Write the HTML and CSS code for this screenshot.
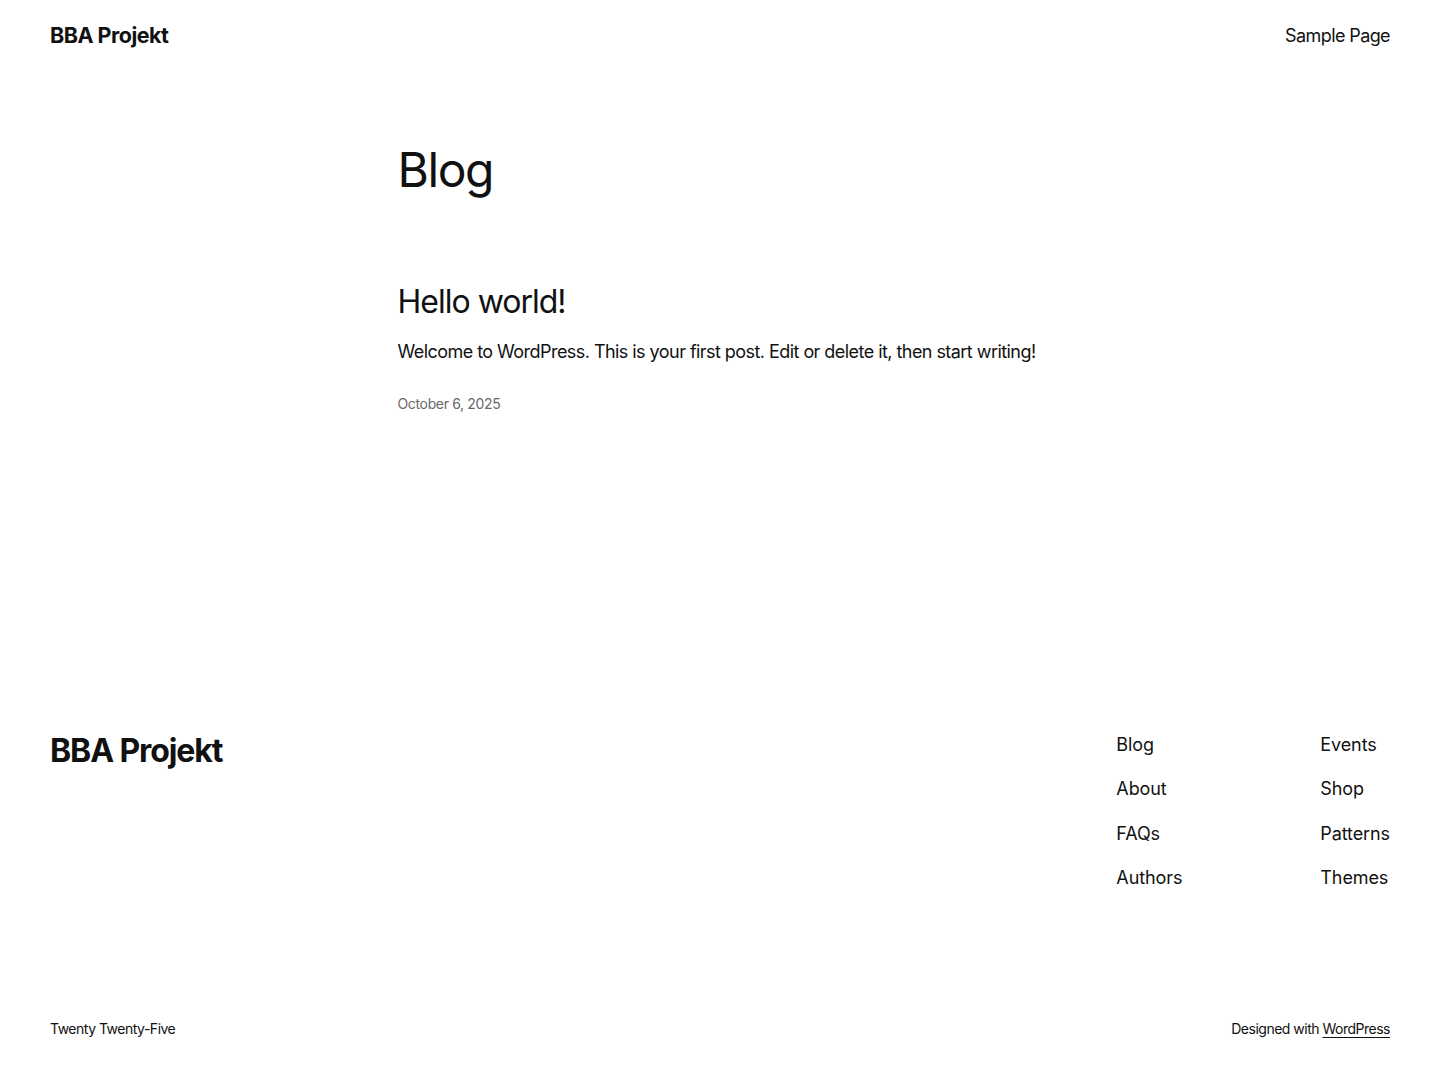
FILE: index.html
```html
<!DOCTYPE html>
<html lang="en">
<head>
<meta charset="utf-8">
<title>Blog – BBA Projekt</title>
<link rel="stylesheet" href="styles.css">
</head>
<body>
<header class="site-header">
  <a class="site-title" href="#">BBA Projekt</a>
  <nav class="header-nav"><a href="#">Sample Page</a></nav>
</header>
<main class="content">
  <h1 class="page-title">Blog</h1>
  <article class="post">
    <h2 class="post-title"><a href="#">Hello world!</a></h2>
    <p class="post-excerpt">Welcome to WordPress. This is your first post. Edit or delete it, then start writing!</p>
    <div class="post-date">October 6, 2025</div>
  </article>
</main>
<footer class="site-footer">
  <div class="footer-top">
    <a class="footer-title" href="#">BBA Projekt</a>
    <div class="footer-navs">
      <ul class="footer-col">
        <li><a href="#">Blog</a></li>
        <li><a href="#">About</a></li>
        <li><a href="#">FAQs</a></li>
        <li><a href="#">Authors</a></li>
      </ul>
      <ul class="footer-col">
        <li><a href="#">Events</a></li>
        <li><a href="#">Shop</a></li>
        <li><a href="#">Patterns</a></li>
        <li><a href="#">Themes</a></li>
      </ul>
    </div>
  </div>
  <div class="footer-bottom">
    <span>Twenty Twenty-Five</span>
    <span>Designed with <a class="u" href="#">WordPress</a></span>
  </div>
</footer>
</body>
</html>
```

FILE: styles.css
```css
* { box-sizing: border-box; }
html, body { margin: 0; padding: 0; }
body {
  font-family: Inter, "Noto Sans", sans-serif;
  color: #111111;
  background: #ffffff;
  -webkit-font-smoothing: antialiased;
}
a { color: inherit; text-decoration: none; }
ul { list-style: none; margin: 0; padding: 0; }

.site-header {
  display: flex;
  justify-content: space-between;
  align-items: center;
  height: 70px;
  padding: 0 50px;
}
.site-title {
  font-size: 21.5px;
  font-weight: 700;
  letter-spacing: -0.5px;
}
.header-nav {
  font-size: 18px;
  letter-spacing: -0.6px;
}

.content {
  width: 645px;
  margin: 0 auto;
  padding-top: 71px;
  height: 590px;
}
.page-title {
  margin: 0;
  font-size: 48px;
  font-weight: 400;
  line-height: 57px;
  letter-spacing: -1.4px;
}
.post { margin-top: 85px; }
.post-title {
  margin: 0;
  font-size: 32px;
  font-weight: 400;
  line-height: 38px;
  letter-spacing: -1px;
}
.post-excerpt {
  margin: 18px 0 0;
  font-size: 18px;
  line-height: 25px;
  letter-spacing: -0.55px;
  white-space: nowrap;
}
.post-date {
  margin-top: 30px;
  font-size: 14px;
  line-height: 20px;
  color: #686868;
  letter-spacing: -0.35px;
}

.site-footer {
  padding: 0 50px 27px;
}
.footer-top {
  display: flex;
  justify-content: space-between;
  align-items: flex-start;
  height: 334px;
  padding-top: 71px;
}
.footer-title {
  font-size: 32px;
  font-weight: 700;
  line-height: 40px;
  letter-spacing: -1.1px;
}
.footer-navs {
  display: flex;
  margin-top: 1px;
}
.footer-col {
  display: flex;
  flex-direction: column;
  gap: 19.4px;
  font-size: 18px;
  line-height: 25px;
  letter-spacing: -0.1px;
}
.footer-col:first-child { width: 204px; }
.footer-bottom {
  display: flex;
  justify-content: space-between;
  align-items: center;
  height: 68px;
  font-size: 14px;
  letter-spacing: -0.5px;
}
.u { text-decoration: underline; text-underline-offset: 3px; }
```
